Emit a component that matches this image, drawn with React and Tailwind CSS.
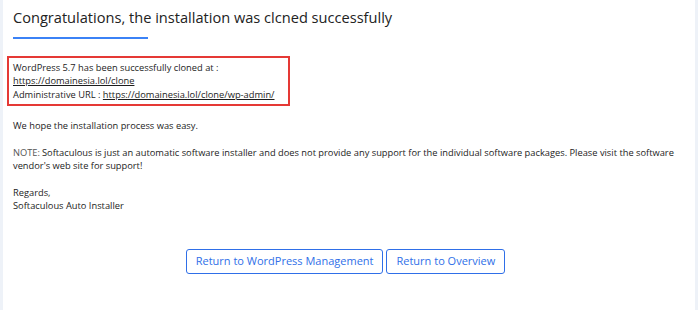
export default function App() {
  return (
    <div className="w-[698px] h-[310px] bg-[#eef2f8] px-[3px] overflow-hidden" style={{ fontFamily: '"Open Sans", sans-serif' }}>
      <div className="h-full bg-white pl-[10px] pr-[10px] pt-[5px] text-[#1c1c1c]">
        <h1 className="text-[14.6px] leading-[24px] text-[#222]">Congratulations, the installation was clcned successfully</h1>
        <div className="w-[135px] h-[1.5px] bg-[#3b82f6] mt-[8px]" />

        <div className="border-2 border-[#e53935] -ml-[6px] w-[283px] mt-[17px] pl-[4px] py-[3px] text-[9.3px] leading-[13.5px]">
          <p>WordPress 5.7 has been successfully cloned at :</p>
          <a href="#" className="underline">https://domainesia.lol/clone</a>
          <p>
            Administrative URL : <a href="#" className="underline">https://domainesia.lol/clone/wp-admin/</a>
          </p>
        </div>

        <div className="text-[9.3px] leading-[13.5px] mt-[13px]">
          <p>We hope the installation process was easy.</p>
          <p className="mt-[13px] pr-[6px]">
            <span className="text-[#555] mr-[2px]">NOTE:</span>Softaculous is just an automatic software installer and does not provide any support for the individual software packages. Please visit the software vendor's web site for support!
          </p>
          <p className="mt-[13px]">Regards,</p>
          <p>Softaculous Auto Installer</p>
        </div>

        <div className="flex justify-center gap-[3px] mt-[36px] -ml-[7px]">
          <button className="h-[25px] px-[9px] border border-[#2f6fe8] rounded-[3px] text-[#2f6fe8] text-[11px]">Return to WordPress Management</button>
          <button className="h-[25px] px-[9px] border border-[#2f6fe8] rounded-[3px] text-[#2f6fe8] text-[11px]">Return to Overview</button>
        </div>
      </div>
    </div>
  )
}
